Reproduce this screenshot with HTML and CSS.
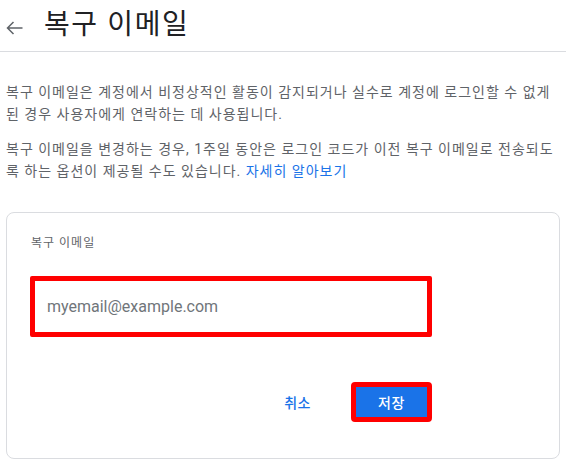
FILE: index.html
```html
<!DOCTYPE html>
<html lang="ko">
<head>
<meta charset="utf-8">
<title>복구 이메일</title>
<link rel="stylesheet" href="styles.css">
</head>
<body>
<header class="header">
  <svg class="back" width="17" height="14" viewBox="0 0 17 14" aria-hidden="true">
    <path d="M16.5 7H1.5M7.5 1L1.5 7L7.5 13" fill="none" stroke="#5f6368" stroke-width="1.5"/>
  </svg>
  <h1 class="title">복구 이메일</h1>
</header>
<main class="main">
  <p class="desc">복구 이메일은 계정에서 비정상적인 활동이 감지되거나 실수로 계정에 로그인할 수 없게 된 경우 사용자에게 연락하는 데 사용됩니다.</p>
  <p class="desc desc-2">복구 이메일을 변경하는 경우, 1주일 동안은 로그인 코드가 이전 복구 이메일로 전송되도록 하는 옵션이 제공될 수도 있습니다. <a class="link" href="#">자세히 알아보기</a></p>
  <section class="card">
    <div class="form">
      <div class="label">복구 이메일</div>
      <div class="input">myemail@example.com</div>
      <div class="actions">
        <button class="btn btn-text">취소</button>
        <button class="btn btn-primary">저장</button>
      </div>
    </div>
  </section>
</main>
</body>
</html>
```
FILE: styles.css
```css
* { box-sizing: border-box; }
html, body { margin: 0; padding: 0; background: #fff; }
body {
  font-family: Roboto, "Noto Sans CJK KR", sans-serif;
  color: #5f6368;
  width: 566px;
  height: 466px;
  overflow: hidden;
}
.header {
  height: 52px;
  display: flex;
  align-items: center;
  padding-left: 6px;
  border-bottom: 1px solid #dadce0;
}
.back { margin-top: 4px; flex: none; }
.title {
  margin: 0 0 2px 21px;
  font-size: 28px;
  font-weight: 400;
  color: #202124;
  line-height: 36px;
  letter-spacing: 1.6px;
}
.main { padding: 0 6px 0 6px; }
.desc {
  margin: 29px 0 0;
  font-size: 14px;
  line-height: 22px;
  width: 556px;
  letter-spacing: 1px;
}
.desc-2 { margin-top: 13px; }
.link { color: #1a73e8; text-decoration: none; }
.card {
  margin-top: 30px;
  width: 554px;
  height: 247px;
  border: 1px solid #dadce0;
  border-radius: 8px;
  padding: 22px 0 0 23px;
}
.form { width: 402px; }
.label {
  font-size: 12px;
  line-height: 16px;
  padding-left: 1px;
  letter-spacing: 1px;
}
.input {
  margin-top: 25px;
  height: 61px;
  border: 5px solid #ff0000;
  border-radius: 2px;
  padding-left: 12px;
  display: flex;
  align-items: center;
  font-size: 16px;
  color: #70757a;
  font-family: Roboto, sans-serif;
}
.actions {
  margin-top: 45px;
  display: flex;
  justify-content: flex-end;
  align-items: center;
  gap: 16px;
}
.btn {
  font-family: Roboto, "Noto Sans CJK KR", sans-serif;
  font-size: 14px;
  font-weight: 500;
  border: none;
  background: none;
  cursor: pointer;
  height: 40px;
  letter-spacing: 0.5px;
}
.btn-text { color: #1a73e8; padding: 0 24px; }
.btn-primary {
  width: 81px;
  color: #fff;
  background: #1a73e8;
  border: 5px solid #ff0000;
  border-radius: 4px;
  padding: 0;
}
```
